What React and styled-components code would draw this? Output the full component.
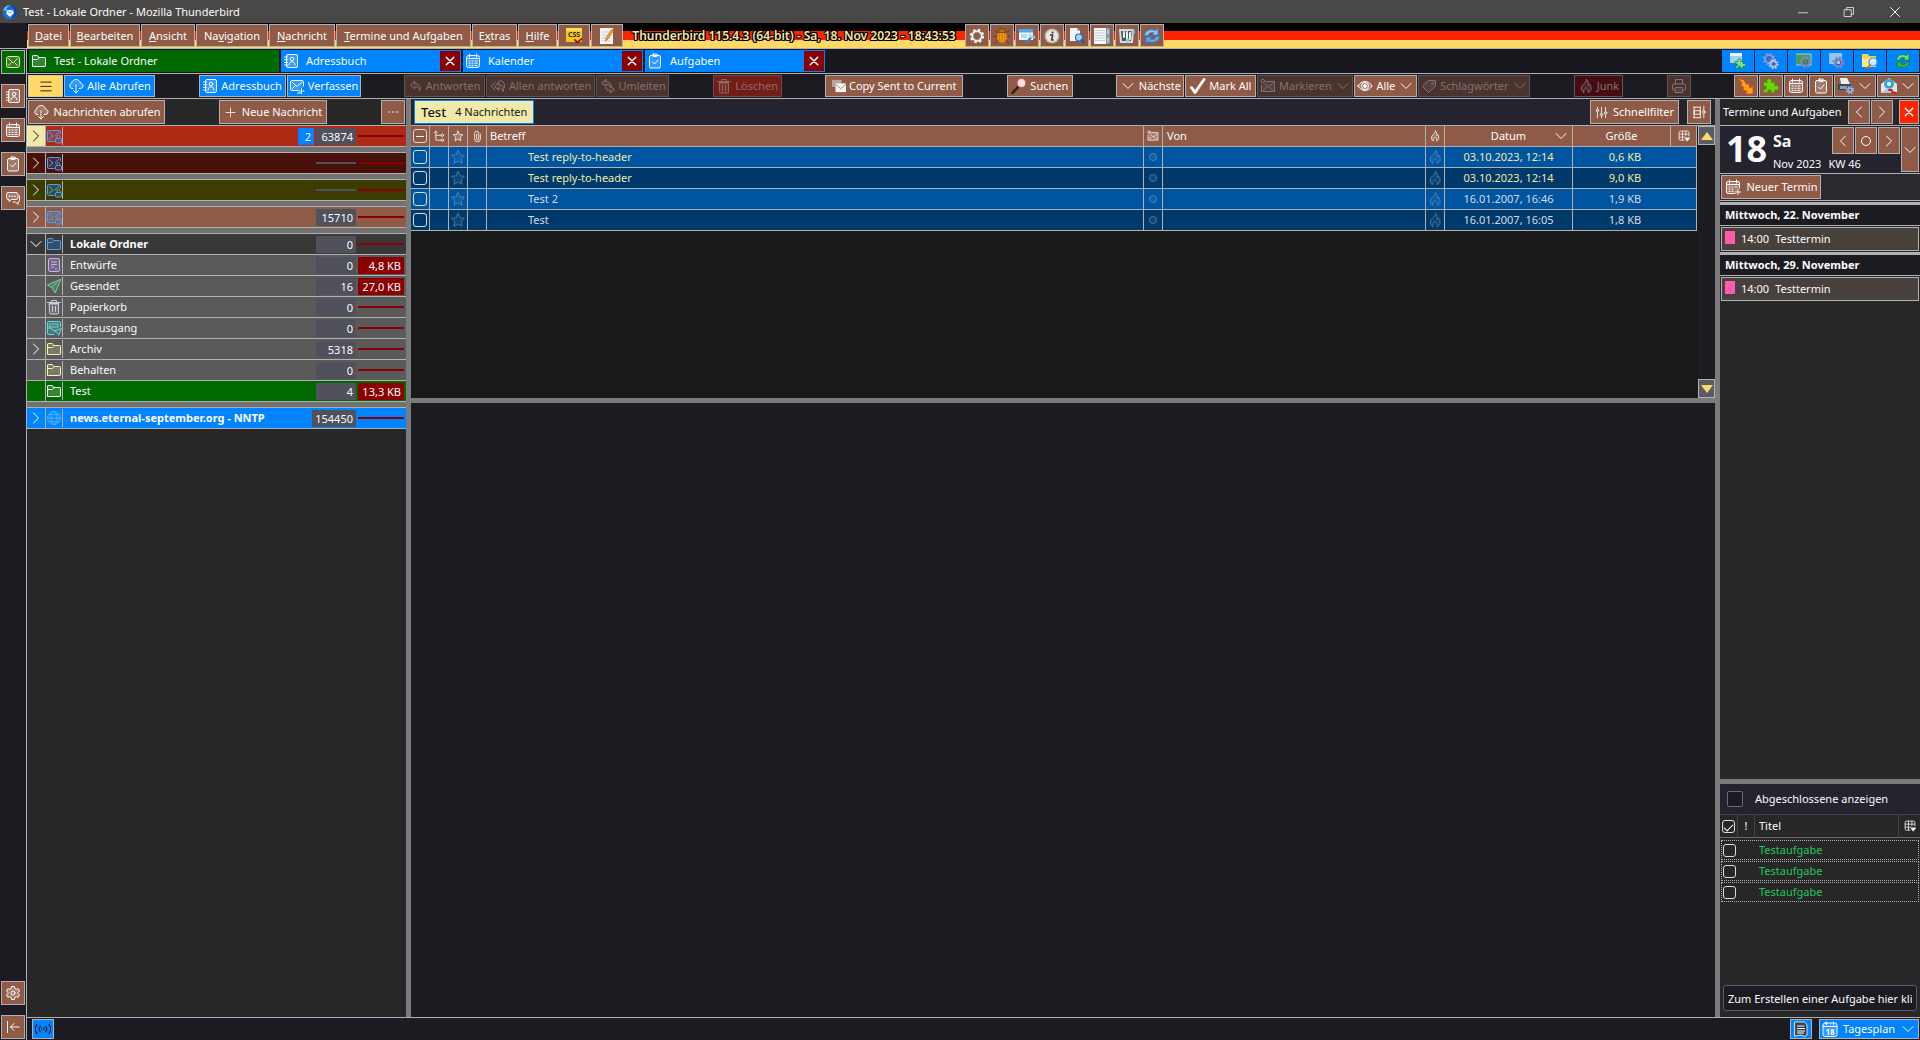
import React from 'react'
import styled, { createGlobalStyle, css } from 'styled-components'

const GlobalStyle = createGlobalStyle`
    * {
        box-sizing: border-box;
    }
    body {
        margin: 0;
        background: #1c1b22;
        color: #fbfbfe;
        font-family: "Noto Sans", "Open Sans", sans-serif;
        font-size: 11px;
        line-height: 16px;
    }
    button, input {
        font: inherit;
        color: inherit;
        margin: 0;
    }
    ul {
        list-style: none;
        margin: 0;
        padding: 0;
    }
`

const line = '#b1b1b3'
const brown = '#8f5b46'
const blue = '#0084ff'
const dark = '#1c1b22'
const khaki = '#f0e9a8'

/* ---------- icons ---------- */

const Svg = styled.svg`
    flex: none;
    display: block;
    width: ${({ $s }) => $s || 16}px;
    height: ${({ $s }) => $s || 16}px;
    fill: none;
    stroke: currentColor;
    stroke-width: 1;
    stroke-linecap: round;
    stroke-linejoin: round;
`

const soft = { fill: 'currentColor', fillOpacity: 0.2 }

const flame = 'M8.5 1.5c.8 2.6-3.8 4.300-5 7.500-.9 2.800.6 4.800 2.500 5.500-.8-2 .2-3.500 2-5 1.800 1.500 2.800 3 2 5 2.300-.8 3.500-2.800 3-5.200-.3-1.400-1-2.300-1.300-3.300-.6.800-1 1.200-1.400 1.500.5-2.300-.3-4.800-1.800-6z'
const puzzle = 'M2 6h3.200c-1-2.500.5-3.500 1.800-3.500s2.800 1 1.800 3.500H12v3c2.500-1 3.500.5 3.500 1.600S14.500 13.500 12 12.500V15H8.800c.6-2-.5-2.700-1.400-2.700S5.300 13 5.900 15H2v-3c2 .6 2.600-.5 2.600-1.400S4 8.600 2 9.200z'

const gearBody = (c, x, y, r, ring = '#4b5388') => (
    <g fill="none" stroke={c}>
        <circle cx={x} cy={y} r={r} strokeWidth="2.400" strokeDasharray={`${r * 0.42} ${r * 0.365}`} strokeLinecap="butt" />
        <circle cx={x} cy={y} r={r - 1.3} strokeWidth="2" />
        <circle cx={x} cy={y} r={r - 2.500} stroke={ring} strokeWidth=".8" />
    </g>
)

const icons = {
    mail: <><rect x="1.5" y="2.500" width="13" height="11" rx="2" {...soft} /><path d="M3.500 4.500 8 9l4.500-4.500M3.500 11.500l2.500-2.500M12.500 11.500 10 9" /></>,
    mailLock: <><path d="M8 13.500H2.500a1 1 0 0 1-1-1v-9a1 1 0 0 1 1-1h11a1 1 0 0 1 1 1V6" {...soft} /><path d="M3 4.500 7 8l-4 3.500M13 4 9 8" /><rect x="9.500" y="10.500" width="6" height="4.500" rx="1" {...soft} /><path d="M11 10.500V9a1.500 1.500 0 0 1 3 0v1.500" /></>,
    book: <><rect x="3.500" y="1.500" width="11" height="13" rx="1.500" {...soft} /><circle cx="9" cy="6" r="1.800" /><path d="M6 12c0-4.500 6-4.500 6 0M1.500 4h3M1.500 6.700h3M1.500 9.400h3M1.500 12h3" /></>,
    calendar: <><rect x="1.500" y="2.500" width="13" height="12" rx="2" {...soft} /><path d="M1.500 5.500h13M4.500 1v3M11.500 1v3" /><path d="M4 8h1M7 8h1M10 8h2M4 10.300h1M7 10.300h1M10 10.300h2M4 12.500h1M7 12.500h1M10 12.500h2" /></>,
    calendarPlus: <><path d="M14.500 9V4a1.500 1.500 0 0 0-1.500-1.500H3A1.500 1.500 0 0 0 1.500 4v9A1.500 1.500 0 0 0 3 14.500h7" {...soft} /><path d="M1.500 5.500h13M4.500 1v3M11.500 1v3M4 8h1M7 8h1M10 8h2M4 10.300h1M7 10.300h1M4 12.500h1M7 12.500h1M13 10.500v5M10.500 13h5" /></>,
    tasks: <><rect x="2.500" y="2.500" width="11" height="12.500" rx="1.500" {...soft} /><rect x="5.500" y="1" width="5" height="2.500" rx="1" {...soft} /><path d="m5.500 9 2 2 3.500-4" /></>,
    chat: <><path d="M3 2.500h8a2 2 0 0 1 2 2v3a2 2 0 0 1-2 2H6.500L4 11.500v-2H3a2 2 0 0 1-1.500-2v-3A2 2 0 0 1 3 2.500z" {...soft} /><path d="M14.500 6v4.500a1.500 1.500 0 0 1-1.500 1.500v2.500L10.500 12H8" /><path d="M4.500 6.200h.1M7.200 6.200h.1M9.900 6.200h.1" strokeWidth="1.500" /></>,
    gear: <><path d="M6.700 1.500h2.600l.5 2 1.400.8 2-.6 1.300 2.300-1.400 1.500v1l1.400 1.500-1.300 2.300-2-.6-1.400.8-.5 2H6.700l-.5-2-1.400-.8-2 .6L1.500 10l1.400-1.500v-1L1.500 6l1.300-2.300 2 .6 1.400-.8z" {...soft} /><circle cx="8" cy="8" r="2" /></>,
    collapse: <path d="M2.500 2.500v11M14 8H5.500M9 4.500 5.500 8 9 11.500" />,
    cloud: <><path d="M5 11H4a2.800 2.800 0 0 1-.5-5.500C3.800 3 6 1.500 8.200 1.500c2.300 0 3.800 1.500 4.100 3.500 1.800.2 2.700 1.600 2.700 3A2.800 2.800 0 0 1 12.500 11H11V8.500H5z" {...soft} stroke="none" /><path d="M5 10.500H4a2.700 2.700 0 0 1-.5-5.200C3.800 3 6 1.500 8.200 1.500c2.300 0 3.800 1.500 4.100 3.500 1.800.2 2.700 1.500 2.700 2.800a2.600 2.600 0 0 1-2.500 2.700H11M8 7v8M5.500 12.500 8 15l2.500-2.500" /></>,
    compose: <><path d="M14.500 8V4a1.500 1.500 0 0 0-1.500-1.500H3A1.500 1.500 0 0 0 1.500 4v7A1.500 1.500 0 0 0 3 12.500h6" {...soft} /><path d="M3.500 4.500 8 8.500l4.500-4M3.500 10.500l2.500-2.500M10 13h5M12.500 10.500v5M8.500 15h4" /></>,
    reply: <path d="M6.500 2.500 1.500 7l5 4.500V9c3.500 0 5 1 5.500 4.500 2.500-5-.5-8.500-5.500-8.500z" {...soft} />,
    replyAll: <><path d="M8.500 4.500 4.500 8.500l4 4V10c3 0 4 1 4.500 3.500 2-4-.5-7-4.500-7z" {...soft} /><path d="M5.500 4 1 8l4 4M8 4.500C8.500 3 10 2 12 3.500c2 .5 3 3 2.500 6" /></>,
    redirect: <><path d="M6 1.500 1.500 5 6 8.500v-2c2.500 0 4 .5 4.500 3 1.500-3-.5-6-4.500-6z" {...soft} /><path d="m10.500 8 4 3.500-4 3.500v-2C7.500 13 6 12 5.500 9.500" {...soft} /></>,
    trash: <><path d="M3.500 5h9v9a1 1 0 0 1-1 1h-7a1 1 0 0 1-1-1z" {...soft} /><path d="M1.500 3.500h13M5.500 3.500v-2h5v2M6.500 7.500v5M9.500 7.500v5M3.500 4.500h9" /></>,
    eye: <><path d="M1 8c3.500-6 10.500-6 14 0-3.500 6-10.500 6-14 0z" {...soft} /><circle cx="8" cy="8" r="3.500" /><circle cx="8" cy="8" r="1.500" fill="currentColor" /></>,
    tag: <><path d="M8 2.500h6.500V8l-7 6.500-6-6z" {...soft} /><circle cx="11.500" cy="5.500" r="1" /></>,
    flame: <path d={flame} {...soft} />,
    printer: <><path d="M4.500 6V1.500h7V6M3.500 12h-1a1 1 0 0 1-1-1V7.500A1.500 1.500 0 0 1 3 6h10a1.500 1.500 0 0 1 1.500 1.500V11a1 1 0 0 1-1 1h-1" /><rect x="4.500" y="9.500" width="7" height="5" {...soft} /></>,
    markMail: <><path d="M6 3.500h8.500v10h-13V7" {...soft} /><circle cx="2.800" cy="3" r="1.800" /><path d="m5 6 3.500 3.500L13 5M3.500 12 6 9.500M12.500 12 10 9.500" /></>,
    down: <path d="m3 5.500 5 5 5-5" />,
    right: <path d="m5.500 3 5 5-5 5" />,
    left: <path d="m10.500 3-5 5 5 5" />,
    ring: <circle cx="8" cy="8" r="4.500" />,
    dot: <circle cx="8" cy="8" r="3.500" {...soft} />,
    plus: <path d="M8 2.500v11M2.500 8h11" />,
    close: <path d="m3 3 10 10M13 3 3 13" strokeWidth="2" />,
    menu: <path d="M2 3.500h12M2 8.500h12M2 13.500h12" />,
    dots: <path d="M3.500 8h.1M8 8h.1M12.500 8h.1" strokeWidth="1.800" />,
    star: <path d="m8 1.500 2 4.300 4.500.5-3.300 3.200.8 4.800L8 12l-4 2.300.8-4.800L1.500 6.300l4.500-.5z" {...soft} />,
    clip: <path d="M11.500 5v6a3.500 3.500 0 0 1-7 0V4a2.500 2.500 0 0 1 5 0v7a1 1 0 0 1-2.500 0V5" />,
    thread: <><path d="M3.500 1.500v11h6M3.500 6.500h6M1.500 3.500l2-2 2 2" /><circle cx="11.500" cy="6.500" r="1.500" /><circle cx="11.500" cy="12.500" r="1.500" /></>,
    columns: <><path d="M14.500 8V3A1.500 1.500 0 0 0 13 1.500H3A1.500 1.500 0 0 0 1.500 3v9A1.500 1.500 0 0 0 3 13.500h5M1.500 5.500h13M1.500 9.500h7M6 1.500v12M10.500 1.500V8" /><path d="M9.500 10.500h6l-3 4z" fill="currentColor" /></>,
    sliders: <><path d="M3 1.500v2M3 7.500v7M8 1.500v7M8 12.500v2M13 1.500v5M13 10.500v4" /><circle cx="3" cy="5.500" r="1.500" {...soft} /><circle cx="8" cy="10.500" r="1.500" {...soft} /><circle cx="13" cy="8.500" r="1.500" {...soft} /></>,
    density: <><path d="M1.500 2.500h8M2.500 6.500h7v4h-7zM1.500 14.500h8M2.500 2.500v12M9.500 2.500v12M13.500 1.500v5M13.500 10v4.500" /><circle cx="13.500" cy="8" r="1.500" /></>,
    folder: <path d="M1.500 13V3A.8.800 0 0 1 2.300 2.500h4l1.500 2h6a.8.800 0 0 1 .7.800V13a.8.800 0 0 1-.8.500H2.300a.8.800 0 0 1-.8-.5zM1.500 6.500h5l1.500-2" {...soft} />,
    draft: <><rect x="2.500" y="1.500" width="11" height="13" rx="1.500" {...soft} /><path d="M5.500 5h5M5.500 7.500h5M5.500 10h2M9.500 12h1" /></>,
    sent: <path d="M14.500 1.500 1.500 7l4.500 2.500L9 14.500zM6 9.500l5-5" {...soft} />,
    outbox: <><path d="M8 14.500H3A1.500 1.500 0 0 1 1.500 13V3A1.500 1.500 0 0 1 3 1.500h10A1.500 1.500 0 0 1 14.500 3v4M1.500 8H5l1 2h2M4 4h8v3H4z" {...soft} /><path d="M15 8.500 8 11l3 1.500 1.500 2.500z" {...soft} /></>,
    globe: <><circle cx="8" cy="8" r="6.500" {...soft} /><ellipse cx="8" cy="8" rx="3" ry="6.500" /><path d="M1.500 8h13M2.500 4.500h11M2.500 11.500h11" /></>,
    sound: <g stroke="#06203f"><circle cx="8" cy="8" r="1.200" fill="#fff" /><path d="M5.200 5.500a4 4 0 0 0 0 5M10.800 5.500a4 4 0 0 1 0 5M2 3.500a7 7 0 0 0 0 9M14 3.500a7 7 0 0 1 0 9" strokeWidth="1.200" /></g>,
    checkMark: <path d="M1.500 9.500 5 14.500 14 1.500" strokeWidth="2.800" stroke="#fff" />,

    logo: <g stroke="none"><circle cx="8" cy="8.500" r="7" fill="#1373d9" /><path d="M1 7C2 3 5 1 8.500 1 6 2 4.500 3.500 4.500 5.500z" fill="#5cc3ff" /><path d="M9 1c4 .5 6.500 4 6 8-.4 3-3 5.500-6 6 3.500-3 4-8 0-14z" fill="#0a47a6" /><path d="M4.500 6h6.500l1 3-4 4-3.500-3z" fill="#e8f6ff" /><path d="m4.500 6 3.500 3 3-3" stroke="#7fb8ee" /></g>,
    css: <g stroke="none"><rect x="0" y="0" width="16" height="14" rx="1" fill="#f2c81e" /><rect x="0" y="0" width="16" height="3" fill="#f8df62" /><text x="8" y="9" fontSize="7" fontWeight="700" textAnchor="middle" fill="#2b2400">CSS</text><path d="m9 12 2.500 2.500L15.500 11" stroke="#a01414" strokeWidth="1.800" /></g>,
    pencil: <g stroke="none"><rect x="1" y="0" width="13" height="16" fill="#f4f5f7" /><path d="M3 4h8M3 7h8M3 10h8M3 13h8" stroke="#c2cbd6" /><path d="M12.500 1.500 7 10l-.5 3 2.500-2 5.500-8.500z" fill="#f5a21b" stroke="#a86407" strokeWidth=".6" /></g>,
    cog: gearBody('#f1f1f1', 8, 8, 6, '#8a8a8a'),
    bug: <g stroke="#5a3005" strokeWidth=".8"><path d="M3 4 1 2.500M13 4l2-1.500M2.500 8.500H.5M13.500 8.500h2M3.500 12.500 1.500 15M12.500 12.500l2 2.500" /><ellipse cx="8" cy="9" rx="5" ry="6" fill="#f0951c" stroke="#b86a0a" /><path d="M4.500 4a3.500 3.500 0 0 1 7 0z" fill="#c97510" /><path d="M8 5v9.500M5.500 6v6.500M10.500 6v6.500" stroke="#b86a0a" strokeWidth=".7" /></g>,
    wrench: <g stroke="none"><rect x="0" y="1" width="14" height="11" fill="#eaf4fd" /><rect x="0" y="1" width="14" height="3.500" fill="#4ba6ea" /><path d="M2 6h6v4H2z" fill="#b5daf5" /><path d="m7.500 14.500 5-5.500" stroke="#3a85cc" strokeWidth="2.500" /><path d="M11 6.500c0 3 3.500 4 5 2" stroke="#a9d2f5" strokeWidth="2" /></g>,
    info: <g stroke="none"><circle cx="8" cy="8" r="7.500" fill="#b9b8a8" /><circle cx="8" cy="8" r="6" fill="#e9e8de" /><circle cx="8.600" cy="4.500" r="1.100" fill="#3c3a34" /><path d="M6.500 7h2.300l-1.200 5h1.600" stroke="#3c3a34" strokeWidth="1.500" /></g>,
    docSearch: <g stroke="none"><path d="M1 0h7l3 3v10H1z" fill="#f5f7fa" /><path d="M8 0v3h3z" fill="#a5b3c4" /><circle cx="10" cy="9.500" r="3.500" fill="#9ed3fa" stroke="#2a6fc0" strokeWidth="1.200" /><path d="m12.500 12 3 3" stroke="#2457a0" strokeWidth="2" /></g>,
    list: <g stroke="none"><rect x="0" y="0" width="16" height="16" fill="#f6f7f7" /><path d="M1 2.500h10M1 5h10M1 7.500h10M1 10h10M1 12.500h10" stroke="#b9c4c4" strokeWidth=".8" /><rect x="12" y="0" width="4" height="16" fill="#8397a5" /><path d="M14 2v4M14 10v4" stroke="#e6f1f7" /></g>,
    panel: <g stroke="none"><path d="M0 1h15l-1 14H1z" fill="#d5dade" /><path d="M2 3h11l-1 10H3z" fill="#4a5560" /><path d="M5 4v5M8 4v8M11 5v6" stroke="#fff" strokeWidth="1.800" /><circle cx="14" cy="4" r="2" fill="#7fd0ee" /><circle cx="8.500" cy="12.500" r="2" fill="#7fd0ee" /></g>,
    refresh: <g stroke="#2278cf" strokeWidth=".7" fill="#7fcbff"><path d="M.5 7.500C1 2 7 .5 11.500 2.500L14 .5v6.500H8l2-2C7 4 4.500 5 4 7.500z" /><path d="M15.500 8.500c-.5 5.500-6.500 7-11 5L2 15.500V9h6l-2 2c3 1 5.500 0 6-2.500z" fill="#4eaef8" /></g>,
    refreshGreen: <g stroke="#0d7a24" strokeWidth=".7" fill="#6fe07a"><path d="M1.500 7C2 2 7 .5 11.500 2.500L14 .5v6.500H8l2-2C7 4 4.500 5 4 7z" /><path d="M14.500 9c-.5 5-5.500 6.500-10 4.500L2 15.500V9h6l-2 2c3 1 5.500 0 6-2z" fill="#2fb845" /></g>,
    winPuzzle: <g stroke="none"><rect x="0" y="0" width="12" height="10" rx="1" fill="#9fd0f5" /><rect x="0" y="0" width="12" height="3" fill="#e5f4ff" /><path d={puzzle} transform="translate(4 4) scale(.75)" fill="#7be58a" stroke="#1a7d2a" /></g>,
    twoGears: <>{gearBody('#8e97cf', 6, 6, 5)}{gearBody('#b7bde2', 10.500, 11, 4)}</>,
    greenGear: <g stroke="none"><rect x="0" y="1" width="15" height="11" fill="#3f9d58" stroke="#cfe3d3" strokeWidth=".8" />{gearBody('#8389a8', 9.500, 9, 5)}</g>,
    blueGear: <g stroke="none"><rect x="0" y="0" width="13" height="11" rx="1" fill="#8cc9f8" />{gearBody('#8287c4', 9.500, 9.500, 5)}</g>,
    folderSearch: <g stroke="none"><path d="M0 1h6l1 2h7v11H0z" fill="#f9d24a" /><path d="M0 5h14v9H0z" fill="#fce68a" /><circle cx="11" cy="9" r="4" fill="#d3ecfd" stroke="#4c93d6" strokeWidth="1.200" /><path d="m8 12-3 3.500" stroke="#c07818" strokeWidth="1.800" /></g>,
    bolt: <path d="m0 0 6 2 2.500 4.500 2-1.500 1.500 5 3-2V16H7l2-2.500-4.500-2L6 9.500 2.500 7 4 5z" fill="#ffa01c" stroke="#d8430a" strokeWidth=".8" />,
    puzzle: <path d={puzzle} fill="#69d90a" stroke="#3a9a00" strokeWidth=".6" transform="translate(-1.500 -2) scale(1.100)" />,
    printGear: <g stroke="none"><path d="M2 0h7l3 6H3z" fill="#e9eff4" /><path d="M0 6h13l2 6H0z" fill="#3f4750" /><rect x="2" y="8" width="7" height="3" fill="#8aa0b2" />{gearBody('#8fb9e8', 12, 12, 3)}</g>,
    mailEye: <g stroke="none"><path d="M0 6 8 0l8 6v9H0z" fill="#dfe6ee" /><circle cx="8" cy="6" r="5" fill="#33a8e0" /><circle cx="8" cy="6" r="2" fill="#fff" /><path d="m0 15 7-5 8 5z" fill="#b5c1cd" /><path d="M8 12h3M11 14l4 1" stroke="#d3211c" strokeWidth="2" /></g>,
    copyMail: <g stroke="none"><rect x="0" y="1" width="11" height="8" fill="#b9a59c" /><rect x="4" y="5" width="12" height="10" fill="#f4f1ef" /><path d="m4 6 6 5 6-5" stroke="#9b8378" /></g>,
    magnifier: <g stroke="none"><path d="M7 9 1.500 15" stroke="#2b2020" strokeWidth="2.500" /><circle cx="10.500" cy="5" r="4.500" fill="#f6dede" stroke="#c3484b" /></g>,
    doc: <g stroke="#fff" strokeWidth=".8"><path d="M2 1h9.500L14 4v10l-2 1.500L8 14l-6 1z" fill="#37404d" /><path d="M4.500 5h6.500M4.500 7.500h7M4.500 10h7M4.500 12h6" strokeWidth="1.200" /></g>,
    day: <><rect x="1" y="2" width="14" height="13.500" rx="2" {...soft} /><path d="M1 5.500h14M4.500 1v2.500M11.500 1v2.500" /><text x="8" y="13.500" fontSize="8" fontWeight="700" textAnchor="middle" fill="currentColor" stroke="none">18</text></>
}

const Icon = ({ name, size }) => <Svg viewBox="0 0 16 16" $s={size} aria-hidden="true">{icons[name]}</Svg>

/* ---------- shared parts ---------- */

const tones = {
    brown: css`background: ${brown}; border-color: ${line};`,
    blue: css`background: ${blue}; border-color: ${line};`,
    green: css`background: #006a00; border-color: ${line}; color: ${khaki};`,
    yellow: css`background: #ffd966; border-color: #cfc9a8; color: #15141a;`,
    dim: css`background: #4a332d; border-color: #5a5557; color: #7b7477;`,
    delete: css`background: #731d17; border-color: #6a4a4a; color: #8f6a68;`,
    junk: css`background: #450c12; border-color: #5a5557; color: #7b7477;`,
    close: css`background: #ff2400; border-color: ${line};`
}

const Button = styled.button`
    display: flex;
    align-items: center;
    justify-content: center;
    flex: none;
    gap: ${({ $gap }) => $gap || 3}px;
    width: ${({ $w }) => ($w ? $w + 'px' : 'auto')};
    height: ${({ $h }) => $h || 24}px;
    padding: 0;
    border: 1px solid;
    white-space: nowrap;
    line-height: 16px;
    ${({ $tone }) => tones[$tone || 'brown']}
`

const Spring = styled.div`
    flex: ${({ $grow }) => $grow || 1};
`

const Splitter = styled.div`
    flex: none;
    ${({ $horizontal }) => ($horizontal ? 'height: 5px;' : 'width: 5px;')}
    background: #7b7b7d;
`

const Check = styled.input`
    appearance: none;
    display: block;
    flex: none;
    width: ${({ $s }) => $s || 14}px;
    height: ${({ $s }) => $s || 14}px;
    border: 1px solid #dcdcdf;
    border-radius: 3px;
    ${({ $square }) => $square && 'border-color: #6b6a74; border-radius: 2px; background: #1c1b22;'}
    ${({ $mark }) => $mark && css`
        display: grid;
        place-items: center;
        &::after {
            content: "";
            ${$mark === 'minus'
                ? 'width: 8px; height: 1px; background: #fff;'
                : 'width: 4px; height: 8px; border: solid #fff; border-width: 0 1px 1px 0; transform: rotate(45deg);'}
        }
    `}
`

/* ---------- window frame ---------- */

const Window = styled.div`
    display: flex;
    flex-direction: column;
    height: 100vh;
    overflow: hidden;
`

const TitleBar = styled.header`
    display: flex;
    align-items: center;
    gap: 5px;
    flex: none;
    height: 23px;
    padding: 0 2px;
    background: #4a4846;
`

const WindowButtons = styled.div`
    display: flex;
    margin-left: auto;
`

const WindowButton = styled.button`
    display: grid;
    place-items: center;
    width: 46px;
    height: 23px;
    padding: 0;
    border: 0;
    background: none;
`

const MenuBar = styled.nav`
    display: flex;
    flex: none;
    height: 26px;
    border-bottom: 1px solid ${line};
    background: ${dark};
    padding-left: 27px;
`

const Flag = styled.div`
    display: flex;
    flex: 1;
    gap: 1px;
    padding: 1px;
    background: linear-gradient(#000 8px, #ff2400 8px, #ff2400 17px, #ffd966 17px);
`

const Clock = styled.span`
    width: 340px;
    font-size: 12px;
    line-height: 24px;
    font-weight: 600;
    text-align: center;
    white-space: nowrap;
    color: ${khaki};
    text-shadow: 1px 0 #000, -1px 0 #000, 0 1px #000, 0 -1px #000, 1px 1px #000, -1px -1px #000, 1px -1px #000, -1px 1px #000;
`

const Body = styled.div`
    display: flex;
    flex: 1;
    min-height: 0;
`

const Spaces = styled.nav`
    display: flex;
    flex-direction: column;
    gap: 10px;
    flex: none;
    width: 27px;
    padding: 1px;
    border-right: 1px solid ${line};
    background: ${dark};
`

const Main = styled.div`
    display: flex;
    flex-direction: column;
    flex: 1;
    min-width: 0;
`

const TabBar = styled.div`
    display: flex;
    gap: 2px;
    flex: none;
    height: 25px;
    padding: 1px 1px 1px 2px;
    border-bottom: 1px solid ${line};
    background: #18171d;
`

const Tab = styled.div`
    display: flex;
    align-items: center;
    width: ${({ $active }) => ($active ? 250 : 180)}px;
    height: 22px;
    border: 1px solid ${({ $active }) => ($active ? '#006a00' : blue)};
    background: ${({ $active }) => ($active ? '#006a00' : blue)};
`

const TabLabel = styled.button`
    display: flex;
    align-items: center;
    gap: 7px;
    flex: 1;
    height: 20px;
    padding: 0 1px;
    border: 0;
    background: none;
`

const TabClose = styled.button`
    display: grid;
    place-items: center;
    width: 20px;
    height: 20px;
    padding: 0;
    border: 0;
    background: #8b0000;
`

const TabTools = styled.div`
    display: flex;
    gap: 1px;
    margin-left: auto;
`

const TabTool = styled.button`
    display: grid;
    place-items: center;
    width: 32px;
    height: 22px;
    padding: 0;
    border: 0;
    background: ${blue};
`

const Toolbar = styled.div`
    display: flex;
    gap: 1px;
    flex: none;
    height: 25px;
    padding: 1px;
    border-bottom: 1px solid ${line};
    background: ${dark};
`

const StatusBar = styled.footer`
    display: flex;
    align-items: center;
    gap: 7px;
    flex: none;
    height: 23px;
    padding: 0 1px 0 5px;
    border-top: 1px solid ${line};
    background: ${dark};
`

/* ---------- folder pane ---------- */

const FolderPane = styled.aside`
    flex: none;
    width: 379px;
    background: #272728;
`

const PaneHeader = styled.div`
    display: flex;
    align-items: center;
    height: 27px;
    padding: 0 1px;
    border-bottom: 1px solid ${line};
    background: ${({ $bg }) => $bg || '#272728'};
`

const Group = styled.li`
    border-bottom: 5px solid #717171;
    border-top: 1px solid ${line};
    &:first-child {
        border-top: 0;
    }
    &:last-child {
        border-bottom: 0;
    }
`

const FolderRow = styled.div`
    display: flex;
    align-items: center;
    height: 21px;
    padding-right: 2px;
    border-bottom: 1px solid ${line};
    background: ${({ $bg }) => $bg};
    font-weight: ${({ $bold }) => ($bold ? 700 : 400)};
`

const Twisty = styled.button`
    display: grid;
    place-items: center;
    width: 19px;
    height: 20px;
    padding: 0;
    border: 0;
    border-right: 1px solid ${line};
    background: ${({ $hot }) => ($hot ? khaki : 'none')};
    color: ${({ $hot }) => ($hot ? '#15141a' : '#fff')};
`

const FolderIcon = styled.span`
    display: grid;
    place-items: center;
    width: 17px;
    height: 18px;
    border-right: 1px solid ${line};
    color: ${({ $color }) => $color};
`

const FolderName = styled.span`
    flex: 1;
    padding-left: 7px;
`

const Badge = styled.span`
    min-width: ${({ $w }) => $w}px;
    height: ${({ $flat }) => ($flat ? 2 : 17)}px;
    margin-left: 2px;
    padding: 0 3px;
    text-align: right;
    font-weight: 400;
    line-height: 17px;
    background: ${({ $bg }) => $bg};
`

/* ---------- message list ---------- */

const MessagePane = styled.main`
    display: flex;
    flex-direction: column;
    flex: 1;
    min-width: 0;
`

const FolderTitle = styled.h1`
    display: flex;
    align-items: center;
    gap: 9px;
    height: 24px;
    margin: 0 auto 0 2px;
    padding: 0 6px;
    border: 1px solid ${blue};
    background: ${khaki};
    color: #15141a;
    font-size: 13px;
    font-weight: 500;
    span {
        font-size: 11px;
        font-weight: 400;
    }
`

const ListArea = styled.div`
    display: flex;
    flex: none;
    height: 272px;
    background: #19191a;
`

const TableWrap = styled.div`
    flex: 1;
    min-width: 0;
`

const Table = styled.table`
    width: 100%;
    table-layout: fixed;
    border-collapse: separate;
    border-spacing: 0;
`

const Th = styled.th`
    height: 21px;
    padding: 0 ${({ $pad }) => $pad || 0}px;
    border-bottom: 1px solid ${line};
    border-right: 1px solid ${line};
    background: ${brown};
    font-weight: 400;
    text-align: ${({ $left }) => ($left ? 'left' : 'center')};
    svg, input {
        margin: 0 auto;
    }
`

const SortLabel = styled.span`
    display: grid;
    grid-template-columns: 22px 1fr 22px;
    align-items: center;
`

const Tr = styled.tr`
    background: ${({ $odd }) => ($odd ? '#003a6b' : '#0055a0')};
    color: ${({ $fresh }) => ($fresh ? khaki : '#d6dbe2')};
`

const Td = styled.td`
    height: 21px;
    padding: 0 ${({ $padRight }) => $padRight || 0}px 0 ${({ $pad }) => $pad || 0}px;
    border-bottom: 1px solid ${line};
    border-right: 1px solid ${line};
    text-align: ${({ $center }) => ($center ? 'center' : 'left')};
    svg {
        margin: 0 auto;
        color: #8fb0d0;
        opacity: 0.5;
    }
    input {
        margin: 0 auto;
    }
`

const ScrollBar = styled.div`
    display: flex;
    flex-direction: column;
    justify-content: space-between;
    width: 17px;
    margin-left: 1px;
    background: ${dark};
`

const ScrollButton = styled.button`
    display: grid;
    place-items: center;
    width: 17px;
    height: 19px;
    padding: 0;
    border: 1px solid ${line};
    background: #5b5b66;
    &::after {
        content: "";
        border: 6px solid transparent;
        ${({ $down }) => ($down ? 'border-top: 8px solid #ffd966; border-bottom: 0;' : 'border-bottom: 8px solid #ffd966; border-top: 0;')}
    }
`

const Preview = styled.section`
    flex: 1;
    background: ${dark};
`

/* ---------- today pane ---------- */

const TodayPane = styled.aside`
    display: flex;
    flex-direction: column;
    flex: none;
    width: 200px;
    background: #272728;
`

const TodayTitle = styled.span`
    flex: 1;
    padding-left: 2px;
    white-space: nowrap;
`

const DayBox = styled.div`
    display: flex;
    height: 48px;
    padding: 1px 1px 0 6px;
    border-bottom: 1px solid ${line};
    background: #25232d;
`

const BigDay = styled.div`
    width: 47px;
    font: 700 36px/44px "Noto Sans", sans-serif;
`

const DayInfo = styled.div`
    display: flex;
    flex-direction: column;
    flex: 1;
    min-width: 0;
`

const DayTop = styled.div`
    display: flex;
    gap: 1px;
    height: 27px;
    padding-right: 1px;
    strong {
        flex: 1;
        font-size: 16px;
        line-height: 28px;
    }
`

const DayLine = styled.div`
    display: flex;
    gap: 7px;
    line-height: 20px;
`

const NewEvent = styled.div`
    height: 27px;
    padding: 1px;
    border-bottom: 1px solid ${line};
    background: #2a2930;
`

const DateHeading = styled.h2`
    margin: 0;
    height: 24px;
    padding-left: 5px;
    border-top: 3px solid ${line};
    border-bottom: 1px solid ${line};
    background: ${dark};
    font-size: 11px;
    line-height: 20px;
`

const Event = styled.div`
    display: flex;
    gap: 6px;
    height: 24px;
    margin: 1px;
    padding: 3px;
    border: 1px solid ${line};
    background: #48403c;
    line-height: 16px;
    &::before {
        content: "";
        width: 10px;
        height: 13px;
        background: #ff5ab0;
    }
`

const Agenda = styled.section`
    flex: 1;
    padding-top: 1px;
`

const Tasks = styled.section`
    display: flex;
    flex-direction: column;
    height: 233px;
    background: #272728;
`

const Completed = styled.label`
    display: flex;
    align-items: center;
    gap: 12px;
    height: 30px;
    padding: 0 7px;
    background: #25232d;
    white-space: nowrap;
`

const TaskTable = styled(Table)`
    th {
        height: 24px;
        padding: 0;
        border: solid #42414d;
        border-width: 1px 1px 1px 0;
        border-bottom-color: #6b6a74;
        font-weight: 400;
        text-align: center;
    }
    th:nth-child(3) {
        padding-left: 4px;
        text-align: left;
    }
    th:last-child {
        border-right: 0;
    }
    svg, th input {
        margin: 0 auto;
    }
`

const TaskList = styled.ul`
    flex: 1;
    padding: 2px 1px;
`

const Task = styled.li`
    height: 20px;
    margin-bottom: 1px;
    border: 1px dotted ${line};
    color: #1fc75f;
    label {
        display: flex;
        align-items: center;
        gap: 23px;
        height: 18px;
        padding-left: 1px;
    }
`

const TaskInput = styled.input`
    height: 26px;
    margin: 0 3px 6px;
    padding: 0 4px;
    border: 1px solid #5f5e68;
    border-radius: 3px;
    background: ${dark};
    &::placeholder {
        color: #fbfbfe;
        opacity: 1;
    }
`

/* ---------- data ---------- */

const menus = [
    ['D', 'atei', '', 41],
    ['B', 'earbeiten', '', 70],
    ['A', 'nsicht', '', 54],
    ['v', 'igation', 'Na', 72],
    ['N', 'achricht', '', 66],
    ['T', 'ermine und Aufgaben', '', 135],
    ['x', 'tras', 'E', 45],
    ['H', 'ilfe', '', 39]
]

const menuTools = [
    ['cog', 'Einstellungen'],
    ['bug', 'Debugger'],
    ['wrench', 'Entwicklerwerkzeuge'],
    ['info', 'Info'],
    ['docSearch', 'Quelltext'],
    ['list', 'Protokoll'],
    ['panel', 'Fehlerkonsole'],
    ['refresh', 'Neustart']
]

const tabTools = ['winPuzzle', 'twoGears', 'greenGear', 'blueGear', 'folderSearch', 'refreshGreen']

const accounts = [
    { bg: '#ae2a14', unread: 2, count: '63874', hot: true, icon: 'mailLock', color: '#45a1ff', twisty: 'right' },
    { bg: '#4a110b', icon: 'mailLock', color: '#45a1ff', twisty: 'right' },
    { bg: '#3c3c00', icon: 'mailLock', color: '#45a1ff', twisty: 'right' },
    { bg: '#8f5b46', count: '15710', icon: 'mailLock', color: '#45a1ff', twisty: 'right' },
    {
        bg: '#383838', name: 'Lokale Ordner', bold: true, count: '0', icon: 'folder', color: '#45a1ff', twisty: 'down',
        children: [
            { name: 'Entwürfe', count: '0', size: '4,8 KB', icon: 'draft', color: '#cfa8ff' },
            { name: 'Gesendet', count: '16', size: '27,0 KB', icon: 'sent', color: '#6fdc9a' },
            { name: 'Papierkorb', count: '0', icon: 'trash', color: '#cfcfe6' },
            { name: 'Postausgang', count: '0', icon: 'outbox', color: '#4fe0dd' },
            { name: 'Archiv', count: '5318', icon: 'folder', color: '#fff3a8', twisty: 'right' },
            { name: 'Behalten', count: '0', icon: 'folder', color: '#fff3a8' },
            { name: 'Test', count: '4', size: '13,3 KB', icon: 'folder', color: '#fff', bg: '#006a00' }
        ]
    },
    { bg: blue, name: 'news.eternal-september.org - NNTP', bold: true, count: '154450', icon: 'globe', color: '#45b1ff', twisty: 'right' }
]

const messages = [
    ['Test reply-to-header', '03.10.2023, 12:14', '0,6 KB', true],
    ['Test reply-to-header', '03.10.2023, 12:14', '9,0 KB', true],
    ['Test 2', '16.01.2007, 16:46', '1,9 KB', false],
    ['Test', '16.01.2007, 16:05', '1,8 KB', false]
]

const Folder = ({ data }) => (
    <FolderRow $bg={data.bg || '#5a5a5a'} $bold={data.bold}>
        <Twisty $hot={data.hot} aria-label="Aufklappen">{data.twisty && <Icon name={data.twisty} />}</Twisty>
        <FolderIcon $color={data.color}><Icon name={data.icon} /></FolderIcon>
        <FolderName>{data.name}</FolderName>
        {data.unread && <Badge $w={16} $bg={blue}>{data.unread}</Badge>}
        <Badge $w={40} $bg="#51515b" $flat={!data.count}>{data.count}</Badge>
        <Badge $w={46} $bg="#8b0000" $flat={!data.size}>{data.size}</Badge>
    </FolderRow>
)

const App = () => {
    return (
        <Window>
            <GlobalStyle />
            <TitleBar>
                <Icon name="logo" />
                <span>Test - Lokale Ordner - Mozilla Thunderbird</span>
                <WindowButtons>
                    <WindowButton aria-label="Minimieren"><Svg viewBox="0 0 16 16" $s={12}><path d="M2 9h12" /></Svg></WindowButton>
                    <WindowButton aria-label="Verkleinern"><Svg viewBox="0 0 16 16" $s={12}><path d="M2 5h9v9H2zM5 5V2h9v9h-3" /></Svg></WindowButton>
                    <WindowButton aria-label="Schließen"><Svg viewBox="0 0 16 16" $s={12}><path d="m2 2 12 12M14 2 2 14" strokeWidth="1.300" /></Svg></WindowButton>
                </WindowButtons>
            </TitleBar>

            <MenuBar>
                <Flag>
                    {menus.map(([key, rest, before, w]) => (
                        <Button key={before + key + rest} $w={w} $h={23}><span>{before}<u>{key}</u>{rest}</span></Button>
                    ))}
                    <Button $w={32} $h={23} aria-label="CSS"><Icon name="css" /></Button>
                    <Button $w={32} $h={23} aria-label="Notiz"><Icon name="pencil" /></Button>
                    <Clock>Thunderbird 115.4.3 (64-bit) - Sa, 18. Nov 2023 - 18:43:53</Clock>
                    {menuTools.map(([icon, label]) => (
                        <Button key={icon} $w={24} $h={23} aria-label={label}><Icon name={icon} /></Button>
                    ))}
                </Flag>
            </MenuBar>

            <Body>
                <Spaces>
                    <Button $w={24} $tone="green" aria-label="E-Mail"><Icon name="mail" /></Button>
                    <Button $w={24} aria-label="Adressbuch"><Icon name="book" /></Button>
                    <Button $w={24} aria-label="Kalender"><Icon name="calendar" /></Button>
                    <Button $w={24} aria-label="Aufgaben"><Icon name="tasks" /></Button>
                    <Button $w={24} aria-label="Chat"><Icon name="chat" /></Button>
                    <Spring />
                    <Button $w={24} aria-label="Einstellungen"><Icon name="gear" /></Button>
                    <Button $w={24} aria-label="Einklappen"><Icon name="collapse" /></Button>
                </Spaces>

                <Main>
                    <TabBar>
                        <Tab $active><TabLabel><Icon name="folder" />Test - Lokale Ordner</TabLabel></Tab>
                        {[['book', 'Adressbuch'], ['calendar', 'Kalender'], ['tasks', 'Aufgaben']].map(([icon, label]) => (
                            <Tab key={label}>
                                <TabLabel><Icon name={icon} />{label}</TabLabel>
                                <TabClose aria-label="Tab schließen"><Icon name="close" size={12} /></TabClose>
                            </Tab>
                        ))}
                        <TabTools>
                            {tabTools.map((icon) => <TabTool key={icon} aria-label={icon}><Icon name={icon} /></TabTool>)}
                        </TabTools>
                    </TabBar>

                    <Toolbar>
                        <Button $w={35} $h={22} $tone="yellow" aria-label="Menü"><Icon name="menu" size={14} /></Button>
                        <Button $w={91} $h={22} $tone="blue"><Icon name="cloud" />Alle Abrufen</Button>
                        <Spring />
                        <Button $w={87} $h={22} $tone="blue"><Icon name="book" />Adressbuch</Button>
                        <Button $w={74} $h={22} $tone="blue"><Icon name="compose" />Verfassen</Button>
                        <Spring />
                        <Button $w={81} $h={22} $tone="dim" disabled><Icon name="reply" size={14} />Antworten</Button>
                        <Button $w={109} $h={22} $tone="dim" disabled><Icon name="replyAll" />Allen antworten</Button>
                        <Button $w={73} $h={22} $tone="dim" disabled><Icon name="redirect" />Umleiten</Button>
                        <Spring />
                        <Button $w={69} $h={22} $tone="delete" disabled><Icon name="trash" />Löschen</Button>
                        <Spring />
                        <Button $w={138} $h={22}><Icon name="copyMail" size={14} />Copy Sent to Current</Button>
                        <Spring />
                        <Button $w={66} $h={22}><Icon name="magnifier" />Suchen</Button>
                        <Spring />
                        <Button $w={68} $h={22}><Icon name="down" />Nächste</Button>
                        <Button $w={71} $h={22}><Icon name="checkMark" />Mark All</Button>
                        <Button $w={96} $h={22} $tone="dim" disabled><Icon name="markMail" />Markieren<Icon name="down" /></Button>
                        <Button $w={63} $h={22}><Icon name="eye" />Alle<Icon name="down" /></Button>
                        <Button $w={112} $h={22} $tone="dim" disabled><Icon name="tag" />Schlagwörter<Icon name="down" /></Button>
                        <Spring />
                        <Button $w={49} $h={22} $tone="junk" disabled><Icon name="flame" />Junk</Button>
                        <Spring />
                        <Button $w={24} $h={22} $tone="dim" disabled aria-label="Drucken"><Icon name="printer" /></Button>
                        <Spring />
                        <Button $w={24} $h={22} aria-label="Blitz"><Icon name="bolt" /></Button>
                        <Button $w={24} $h={22} aria-label="Add-ons"><Icon name="puzzle" /></Button>
                        <Button $w={24} $h={22} aria-label="Kalender"><Icon name="calendar" /></Button>
                        <Button $w={24} $h={22} aria-label="Aufgaben"><Icon name="tasks" /></Button>
                        <Button $w={42} $h={22} aria-label="Druckoptionen"><Icon name="printGear" /><Icon name="down" /></Button>
                        <Button $w={42} $h={22} aria-label="Kopfzeilen"><Icon name="mailEye" /><Icon name="down" /></Button>
                    </Toolbar>

                    <Body>
                        <FolderPane>
                            <PaneHeader>
                                <Button $w={137} $gap={5}><Icon name="cloud" />Nachrichten abrufen</Button>
                                <Spring />
                                <Button $w={108} $gap={5}><Icon name="plus" size={13} />Neue Nachricht</Button>
                                <Spring />
                                <Button $w={24} aria-label="Optionen"><Icon name="dots" size={14} /></Button>
                            </PaneHeader>
                            <ul>
                                {accounts.map((a) => (
                                    <Group key={a.bg}>
                                        <Folder data={a} />
                                        {a.children && a.children.map((c) => <Folder key={c.name} data={c} />)}
                                    </Group>
                                ))}
                            </ul>
                        </FolderPane>
                        <Splitter />

                        <MessagePane>
                            <PaneHeader $bg="#25232d">
                                <FolderTitle>Test <span>4 Nachrichten</span></FolderTitle>
                                <Button $w={89} $gap={5}><Icon name="sliders" size={13} />Schnellfilter</Button>
                                <Spring $grow="0 0 8px" />
                                <Button $w={24} aria-label="Anzeigeoptionen"><Icon name="density" size={14} /></Button>
                                <Spring $grow="0 0 3px" />
                            </PaneHeader>
                            <ListArea>
                                <TableWrap>
                                    <Table>
                                        <colgroup>
                                            <col width="19" /><col width="19" /><col width="19" /><col width="19" />
                                            <col />
                                            <col width="19" /><col width="263" /><col width="19" />
                                            <col width="128" /><col width="98" /><col width="26" />
                                        </colgroup>
                                        <thead>
                                            <tr>
                                                <Th><Check type="checkbox" $mark="minus" aria-label="Alle auswählen" /></Th>
                                                <Th><Icon name="thread" size={13} /></Th>
                                                <Th><Icon name="star" size={12} /></Th>
                                                <Th><Icon name="clip" size={13} /></Th>
                                                <Th $left $pad={3}>Betreff</Th>
                                                <Th><Icon name="markMail" size={12} /></Th>
                                                <Th $left $pad={4}>Von</Th>
                                                <Th><Icon name="flame" size={12} /></Th>
                                                <Th><SortLabel><i />Datum<Icon name="down" /></SortLabel></Th>
                                                <Th>Größe</Th>
                                                <Th><Icon name="columns" size={12} /></Th>
                                            </tr>
                                        </thead>
                                        <tbody>
                                            {messages.map(([subject, date, size, fresh], i) => (
                                                <Tr key={i} $odd={i % 2 === 1} $fresh={fresh}>
                                                    <Td><Check type="checkbox" aria-label="Auswählen" /></Td>
                                                    <Td />
                                                    <Td><Icon name="star" /></Td>
                                                    <Td />
                                                    <Td $pad={41}>{subject}</Td>
                                                    <Td><Icon name="dot" /></Td>
                                                    <Td />
                                                    <Td><Icon name="flame" /></Td>
                                                    <Td $center>{date}</Td>
                                                    <Td $center $padRight={19} colSpan={2}>{size}</Td>
                                                </Tr>
                                            ))}
                                        </tbody>
                                    </Table>
                                </TableWrap>
                                <ScrollBar>
                                    <ScrollButton aria-label="Nach oben" />
                                    <ScrollButton $down aria-label="Nach unten" />
                                </ScrollBar>
                            </ListArea>
                            <Splitter $horizontal />
                            <Preview />
                        </MessagePane>
                        <Splitter />

                        <TodayPane>
                            <PaneHeader>
                                <TodayTitle>Termine und Aufgaben</TodayTitle>
                                <Button $w={22} aria-label="Zurück"><Icon name="left" /></Button>
                                <Spring $grow="0 0 1px" />
                                <Button $w={22} aria-label="Vor"><Icon name="right" /></Button>
                                <Spring $grow="0 0 6px" />
                                <Button $w={20} $tone="close" aria-label="Schließen"><Icon name="close" size={12} /></Button>
                            </PaneHeader>
                            <DayBox>
                                <BigDay>18</BigDay>
                                <DayInfo>
                                    <DayTop>
                                        <strong>Sa</strong>
                                        <Button $w={22} $h={27} aria-label="Voriger Tag"><Icon name="left" /></Button>
                                        <Button $w={22} $h={27} aria-label="Heute"><Icon name="ring" /></Button>
                                        <Button $w={22} $h={27} aria-label="Nächster Tag"><Icon name="right" /></Button>
                                    </DayTop>
                                    <DayLine><span>Nov 2023</span><span>KW 46</span></DayLine>
                                </DayInfo>
                                <Button $w={18} $h={45} aria-label="Minimonat"><Icon name="down" /></Button>
                            </DayBox>
                            <NewEvent>
                                <Button $w={100} $gap={6}><Icon name="calendarPlus" />Neuer Termin</Button>
                            </NewEvent>
                            <Agenda>
                                <DateHeading>Mittwoch, 22. November</DateHeading>
                                <Event><span>14:00</span><span>Testtermin</span></Event>
                                <DateHeading>Mittwoch, 29. November</DateHeading>
                                <Event><span>14:00</span><span>Testtermin</span></Event>
                            </Agenda>
                            <Splitter $horizontal />
                            <Tasks>
                                <Completed><Check type="checkbox" $square $s={16} />Abgeschlossene anzeigen</Completed>
                                <TaskTable>
                                    <colgroup><col width="18" /><col width="17" /><col /><col width="21" /></colgroup>
                                    <thead>
                                        <tr>
                                            <th><Check type="checkbox" $mark="tick" $s={13} aria-label="Erledigt" /></th>
                                            <th>!</th>
                                            <th>Titel</th>
                                            <th><Icon name="columns" size={12} /></th>
                                        </tr>
                                    </thead>
                                </TaskTable>
                                <TaskList>
                                    {[1, 2, 3].map((n) => (
                                        <Task key={n}><label><Check type="checkbox" $s={13} />Testaufgabe</label></Task>
                                    ))}
                                </TaskList>
                                <TaskInput placeholder="Zum Erstellen einer Aufgabe hier klicken" aria-label="Neue Aufgabe" />
                            </Tasks>
                        </TodayPane>
                    </Body>

                    <StatusBar>
                        <Button $w={22} $h={20} $tone="blue" aria-label="Verbindung"><Icon name="sound" /></Button>
                        <Spring />
                        <Button $w={22} $h={20} $tone="blue" aria-label="Dokument"><Icon name="doc" /></Button>
                        <Button $w={100} $h={20} $gap={5} $tone="blue"><Icon name="day" />Tagesplan<Icon name="down" /></Button>
                    </StatusBar>
                </Main>
            </Body>
        </Window>
    )
}

export default App
